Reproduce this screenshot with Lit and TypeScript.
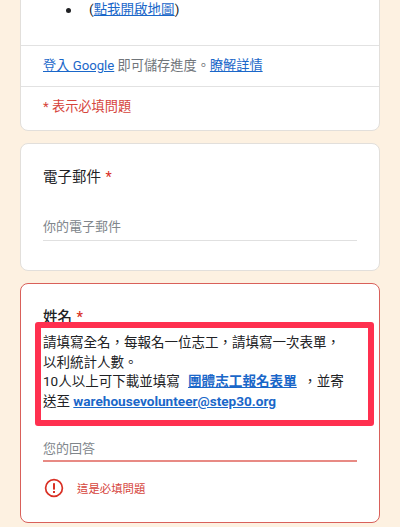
import { LitElement, html, css } from "lit";
import { customElement } from "lit/decorators.js";

@customElement("app-root")
export class AppRoot extends LitElement {
  static styles = css`
    :host {
      display: block;
      width: 400px;
      height: 527px;
      overflow: hidden;
      background: #fdf1e1;
      font-family: Roboto, "Noto Sans CJK TC", sans-serif;
      color: #202124;
    }
    .page {
      display: flex;
      flex-direction: column;
      gap: 12px;
      padding: 0 20px;
      margin-top: -20px;
    }
    .card {
      background: #fff;
      border: 1px solid #e2dfdb;
      border-radius: 8px;
      box-sizing: border-box;
      width: 360px;
    }
    .intro { height: 151px; display: flex; flex-direction: column; }
    .bullet-row {
      height: 65px;
      flex: none;
      box-sizing: border-box;
      padding: 18px 0 0 22px;
      font-size: 13.5px;
      line-height: 20px;
      display: flex;
      border-bottom: 1px solid #e2e2e2;
    }
    .dot {
      width: 5px;
      height: 5px;
      border-radius: 50%;
      background: #202124;
      margin: 9px 18px 0 23px;
    }
    a { color: #1a67c9; text-decoration: underline; }
    .signin {
      height: 41px;
      flex: none;
      box-sizing: border-box;
      padding: 10px 0 0 22px;
      font-size: 13.2px;
      line-height: 20px;
      color: #70757a;
      border-bottom: 1px solid #e2e2e2;
    }
    .req-note {
      padding: 10px 0 0 22px;
      font-size: 13.2px;
      line-height: 20px;
      color: #d6453c;
    }
    .email { height: 128px; padding: 24px 22px 0 22px; }
    .title {
      font-size: 14.5px;
      line-height: 20px;
      color: #202124;
    }
    .star { color: #d93025; margin-left: 1px; font-size: 14.5px; }
    .field {
      font-size: 13px;
      line-height: 20px;
      color: #80868b;
      border-bottom: 1px solid #e0e0e0;
      padding-bottom: 3px;
      margin-top: 29px;
    }
    .name {
      height: 240px;
      padding: 24px 22px 0 22px;
      border-color: #d9605a;
      position: relative;
    }
    .name .title { font-weight: 500; }
    .desc {
      font-size: 13.5px;
      line-height: 19.6px;
      margin-top: 5px;
      color: #202124;
    }
    .desc a { font-weight: 700; font-size: 13.6px; }
    .desc .gap { margin: 0 3px 0 5px; }
    .box {
      position: absolute;
      left: 14px;
      top: 38px;
      width: 339px;
      height: 104px;
      box-sizing: border-box;
      border: 6.5px solid #ff304f;
      border-radius: 3px;
      pointer-events: none;
    }
    .name .field {
      margin-top: 28px;
      border-bottom: 2px solid #e88a84;
      padding-bottom: 1px;
    }
    .error {
      display: flex;
      align-items: center;
      gap: 12px;
      margin-top: 15px;
      font-size: 11.4px;
      color: #d6453c;
    }
    .error svg { width: 22px; height: 22px; flex: none; }
  `;

  render() {
    return html`
      <div class="page" lang="zh-Hant">
        <section class="card intro">
          <div class="bullet-row">
            <span class="dot"></span>
            <span>(<a href="#">點我開啟地圖</a>)</span>
          </div>
          <div class="signin"><a href="#">登入 Google</a> 即可儲存進度。<a href="#">瞭解詳情</a></div>
          <div class="req-note">* 表示必填問題</div>
        </section>
        <section class="card email">
          <div class="title">電子郵件 <span class="star">*</span></div>
          <div class="field">你的電子郵件</div>
        </section>
        <section class="card name">
          <div class="title">姓名 <span class="star">*</span></div>
          <div class="desc">
            請填寫全名，每報名一位志工，請填寫一次表單，<br />
            以利統計人數。<br />
            10人以上可下載並填寫 <a class="gap" href="#">團體志工報名表單</a> ，並寄<br />
            送至 <a href="#">warehousevolunteer@step30.org</a>
          </div>
          <div class="box"></div>
          <div class="field">您的回答</div>
          <div class="error">
            <svg viewBox="0 0 22 22" aria-hidden="true">
              <circle cx="11" cy="11" r="8.4" fill="none" stroke="#d93025" stroke-width="1.7"></circle>
              <rect x="10" y="6.2" width="2" height="6.4" fill="#d93025"></rect>
              <rect x="10" y="14" width="2" height="2" fill="#d93025"></rect>
            </svg>
            <span>這是必填問題</span>
          </div>
        </section>
      </div>
    `;
  }
}
